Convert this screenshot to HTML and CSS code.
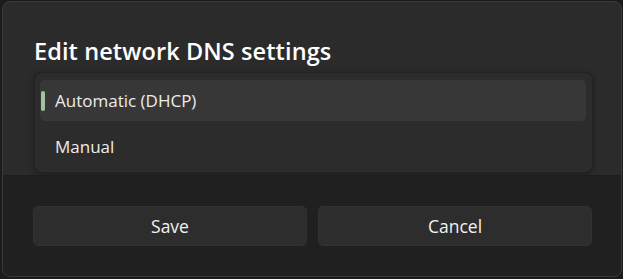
FILE: index.html
```html
<!DOCTYPE html>
<html>
<head>
<meta charset="utf-8">
<link rel="stylesheet" href="styles.css">
</head>
<body>
<div class="dialog">
  <div class="content">
    <h1 class="title">Edit network DNS settings</h1>
    <div class="dropdown">
      <div class="option selected"><span class="indicator"></span>Automatic (DHCP)</div>
      <div class="option">Manual</div>
    </div>
  </div>
  <div class="footer">
    <button class="btn">Save</button>
    <button class="btn">Cancel</button>
  </div>
</div>
</body>
</html>
```
FILE: styles.css
```css
html, body {
  margin: 0;
  padding: 0;
  background: #1b1b1b;
  width: 623px;
  height: 279px;
  overflow: hidden;
  font-family: "Open Sans", "Noto Sans", sans-serif;
}
.dialog {
  margin: 1px 0 0 2px;
  width: 620px;
  height: 276px;
  box-sizing: border-box;
  border: 1px solid #3a3a3a;
  border-radius: 8px;
  background: #2b2b2b;
  overflow: hidden;
  display: flex;
  flex-direction: column;
}
.content {
  height: 173px;
  padding: 0 28px 0 31px;
  display: flex;
  flex-direction: column;
}
.title {
  margin: 30px 0 0 0;
  font-size: 23.5px;
  font-weight: 600;
  line-height: 39px;
  color: #ffffff;
  letter-spacing: 0.1px;
}
.dropdown {
  margin-top: 1px;
  height: 101px;
  box-sizing: border-box;
  background: #2c2c2c;
  border: 1px solid #232323;
  border-radius: 8px;
  padding: 7px 6px 0 5px;
  box-shadow: 0 2px 6px rgba(0,0,0,0.3);
  display: flex;
  flex-direction: column;
  gap: 5px;
}
.option {
  height: 41px;
  border-radius: 5px;
  display: flex;
  align-items: center;
  padding-left: 15px;
  font-size: 17px;
  color: #ececec;
  position: relative;
}
.option.selected {
  background: #373737;
}
.indicator {
  position: absolute;
  left: 1px;
  top: 11px;
  width: 4px;
  height: 20px;
  border-radius: 2px;
  background: #a3c29e;
}
.footer {
  flex: 1;
  background: #202020;
  border-top: 1px solid #1d1d1d;
  padding: 30px 29px 0 30px;
  display: flex;
  gap: 11px;
  align-items: flex-start;
}
.btn {
  flex: 1;
  height: 40px;
  border: 1px solid #323232;
  border-radius: 5px;
  background: #2d2d2d;
  color: #f2f2f2;
  font-family: "Open Sans", "Noto Sans", sans-serif;
  font-size: 17.5px;
  padding: 0;
}
```
